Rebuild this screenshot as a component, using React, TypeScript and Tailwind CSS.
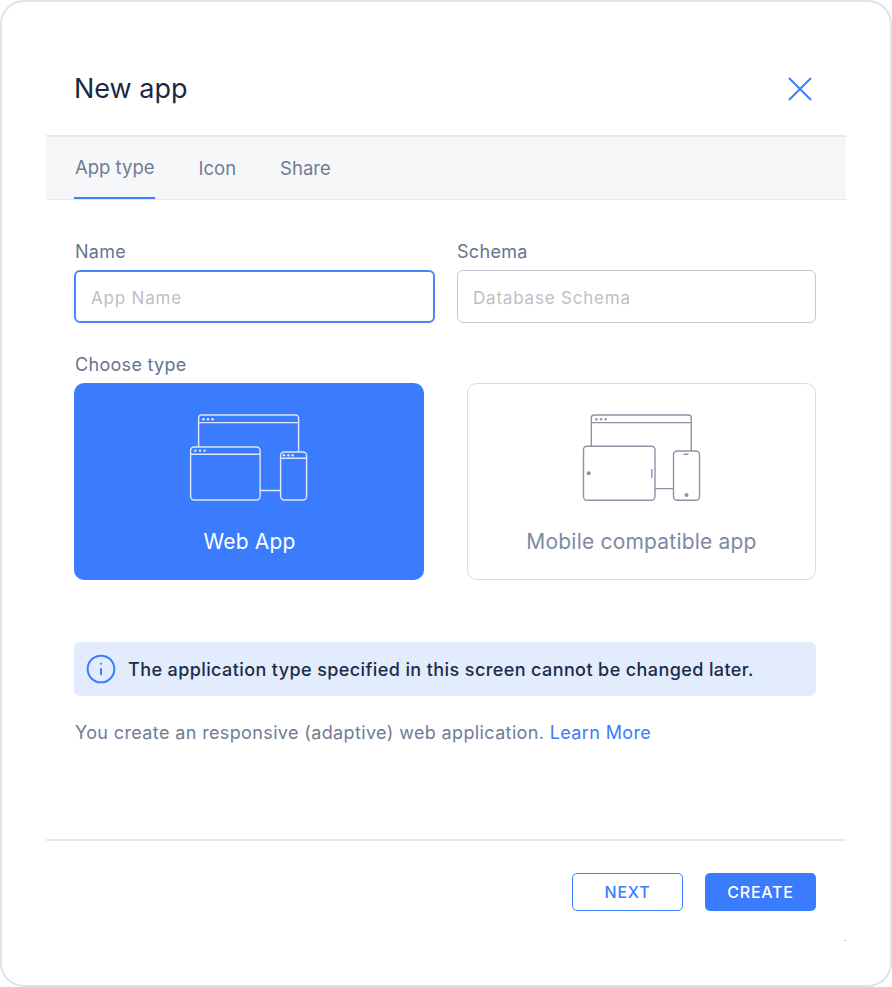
import React from 'react';
import { X, Info } from 'lucide-react';

const WebIcon = () => (
  <svg width="120" height="90" viewBox="189 413 120 90" fill="none" stroke="currentColor" strokeWidth="1.4">
    <path d="M198.6 447V418a3 3 0 0 1 3-3h94a3 3 0 0 1 3 3v34M198.6 422.6H298.6" />
    <rect x="190.6" y="447" width="69.5" height="53" rx="3.5" />
    <path d="M190.6 454.2H260" />
    <rect x="280.6" y="452" width="26" height="48" rx="3.5" />
    <path d="M280.6 458.2H306.6M260 490.5H280.6" />
    <g fill="currentColor" stroke="none">
      <circle cx="203.4" cy="419.3" r="1.2" /><circle cx="208" cy="419.3" r="1.2" /><circle cx="212.6" cy="419.3" r="1.2" />
      <circle cx="195.4" cy="450.6" r="1.2" /><circle cx="200" cy="450.6" r="1.2" /><circle cx="204.6" cy="450.6" r="1.2" />
      <circle cx="284" cy="455.2" r="1.2" /><circle cx="288.4" cy="455.2" r="1.2" /><circle cx="292.6" cy="455.2" r="1.2" />
    </g>
  </svg>
);

const MobileIcon = () => (
  <svg width="120" height="90" viewBox="581.5 413 120 90" fill="none" stroke="currentColor" strokeWidth="1.4">
    <path d="M590.8 446V418a3 3 0 0 1 3-3h94a3 3 0 0 1 3 3v33M590.8 422.6H691" />
    <rect x="583" y="446.2" width="71.5" height="54" rx="3.5" />
    <rect x="673" y="451" width="26" height="49.2" rx="3.5" />
    <path d="M654.5 488.6H673M651.3 469V478M683 454.2H688" />
    <g fill="currentColor" stroke="none">
      <circle cx="596" cy="419.3" r="1.2" /><circle cx="600.6" cy="419.3" r="1.2" /><circle cx="605.2" cy="419.3" r="1.2" />
      <circle cx="588.2" cy="473.2" r="2" /><circle cx="686" cy="495" r="2" />
    </g>
  </svg>
);

const App = () => {
  return (
    <div className="relative w-[892px] h-[987px] bg-white border-2 border-[#dfe3e8] rounded-[24px] px-[44px] font-['Inter',sans-serif] overflow-hidden">
      {/* Header */}
      <div className="h-[133px] flex items-center justify-between pl-[28px] pr-[25px] pt-[41px]">
        <h1 className="text-[27px] leading-[34px] text-[#1a2a44]">New app</h1>
        <X className="w-[42px] h-[42px] text-[#3b7cff]" strokeWidth={1.1} />
      </div>

      {/* Tabs */}
      <div className="h-[65px] bg-[#f6f7f9] border-t-2 border-b border-t-[#e8e9ec] border-b-[#e6e8ec] flex pl-[28px] text-[18.5px] text-[#6f7d94]">
        <div className="h-[62px] flex items-center border-b-2 border-[#3b7cff] pt-[2px] pl-px">App type</div>
        <div className="h-[62px] flex items-center pt-[2px] ml-[44px]">Icon</div>
        <div className="h-[62px] flex items-center pt-[2px] ml-[44px]">Share</div>
      </div>

      <div className="pl-[28px] pr-[30px]">
        {/* Fields */}
        <div className="grid grid-cols-[361px_359px] gap-x-[22px] pt-[40px]">
          <div>
            <label className="block text-[18px] leading-[24px] tracking-[0.3px] pl-px text-[#66758c] mb-[6px]">Name</label>
            <input
              placeholder="App Name"
              className="w-full h-[53px] rounded-[6px] border-2 border-[#4a87ff] px-[15px] pt-[2px] text-[17px] tracking-[0.8px] outline-none placeholder:text-[#bcc0c6]"
            />
          </div>
          <div>
            <label className="block text-[18px] leading-[24px] tracking-[0.3px] text-[#66758c] mb-[6px]">Schema</label>
            <input
              placeholder="Database Schema"
              className="w-full h-[53px] rounded-[6px] border border-[#c3c9d2] px-[15px] pt-[2px] text-[17px] tracking-[0.8px] outline-none placeholder:text-[#bcc0c6]"
            />
          </div>
        </div>

        {/* Type cards */}
        <div className="text-[18px] leading-[24px] tracking-[0.3px] pl-px text-[#66758c] mt-[30px] mb-[6px]">Choose type</div>
        <div className="flex justify-between">
          <div className="w-[350px] h-[197px] rounded-[10px] bg-[#3b7cff] text-[#dde8ff] flex flex-col items-center pt-[30px]">
            <WebIcon />
            <div className="text-[21px] leading-[28px] tracking-[0.2px] text-white mt-[25px] pl-px">Web App</div>
          </div>
          <div className="w-[349px] h-[197px] rounded-[10px] border border-[#d8dce2] text-[#8b94a6] flex flex-col items-center pt-[29px]">
            <MobileIcon />
            <div className="text-[21px] leading-[28px] tracking-[0.2px] text-[#7e8aa0] mt-[25px]">Mobile compatible app</div>
          </div>
        </div>

        {/* Notice */}
        <div className="mt-[62px] h-[54px] rounded-[6px] bg-[#e3ecfc] flex items-center pl-[11px] gap-[11px] text-[18px] tracking-[0.4px] font-medium text-[#1c2b4a]">
          <Info className="w-[32px] h-[32px] text-[#3b7cff]" strokeWidth={1.5} />
          <span>The application type specified in this screen cannot be changed later.</span>
        </div>
        <p className="mt-[25px] pl-px text-[18px] leading-[24px] tracking-[0.37px] text-[#6f7d94]">
          You create an responsive (adaptive) web application. <a className="text-[#3b7cff]">Learn More</a>
        </p>
      </div>

      {/* Footer */}
      <div className="mt-[94px] border-t-2 border-[#e8e9ec] flex justify-end gap-[22px] pr-[30px] pt-[32px]">
        <button className="w-[111px] h-[38px] rounded-[5px] border-[1.5px] border-[#3b7cff] text-[#3b7cff] text-[16px] tracking-[0.8px] font-medium">NEXT</button>
        <button className="w-[111px] h-[38px] rounded-[5px] bg-[#3b7cff] text-white text-[16px] tracking-[0.8px] font-medium">CREATE</button>
      </div>
      <div className="absolute left-[843px] top-[938px] w-px h-px bg-[#8a8f98]" />
    </div>
  );
};

export default App;
